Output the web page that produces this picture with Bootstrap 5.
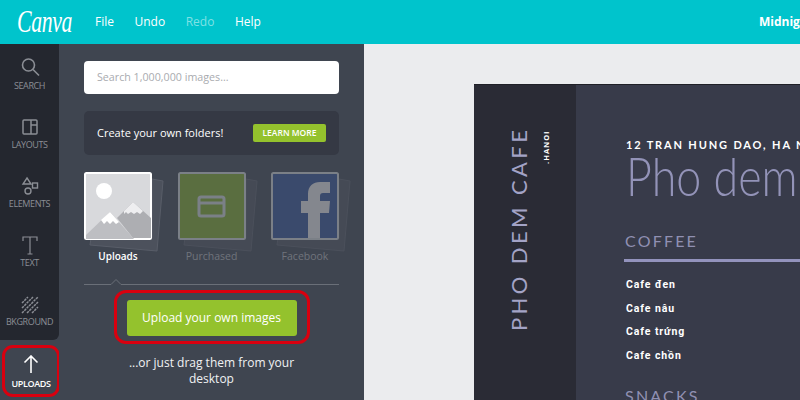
<!DOCTYPE html>
<html lang="en">
<head>
    <meta charset="UTF-8">
    <title>Canva</title>
    <link href="https://cdn.jsdelivr.net/npm/bootstrap@5.3.0/dist/css/bootstrap.min.css" rel="stylesheet">
    <style>
        html, body { height: 400px; overflow: hidden; }
        body { font-family: "Open Sans", sans-serif; background: #ebecee; }
        .topbar { height: 44px; background: #00c4cc; color: #fff; }
        .brand-box { width: 95px; flex: none; }
        .brand-word { font-family: "Liberation Serif", serif; font-style: italic; font-size: 32px; line-height: 42px; padding-left: 17px; letter-spacing: -.5px; white-space: nowrap; transform: scaleX(.68); transform-origin: 17px 50%; }
        .top-link { font-size: 12px; font-weight: 500; line-height: 44px; margin-right: 20.500px; }
        .top-link.faded { color: #7fe1e5; }
        .doc-title { font-size: 12px; font-weight: 700; line-height: 44px; margin-left: auto; width: 41px; white-space: nowrap; overflow: hidden; }
        .workspace { height: 356px; }
        .side-col { width: 59px; background: #3f4550; }
        .side-tabs { height: 296px; padding-top: 4px; background: #24272f; border-bottom-right-radius: 6px; }
        .side-tab { height: 59px; padding-top: 5px; color: #8b8e95; font-size: 9px; letter-spacing: -.4px; line-height: 12px; }
        .side-tab svg { display: block; height: 30px; margin-bottom: -3px; }
        .side-current { width: 58px; height: 52px; margin: 5px 0 0 2px; border: 3px solid #d9000f; border-radius: 11px; color: #fff; font-size: 9px; font-weight: 600; letter-spacing: -.4px; line-height: 12px; }
        .side-current svg { display: block; margin-bottom: 5px; }
        .panel { width: 305px; padding: 17px 25px 0; background: #3f4550; }
        .search-box { height: 33px; padding-left: 13px; background: #fff; border-radius: 4px; color: #a9abaf; font-size: 10.700px; line-height: 33px; }
        .promo { height: 44px; margin-top: 17px; padding: 0 13px; background: #353944; border-radius: 5px; color: #fff; font-size: 11px; }
        .promo-btn { width: 73px; height: 18px; background: #94c22d; border-radius: 2px; font-size: 8.500px; font-weight: 600; line-height: 18px; text-align: center; }
        .tiles { margin-top: 17px; }
        .tile { width: 68px; text-align: center; color: #70747c; font-size: 10.500px; }
        .tile svg { display: block; overflow: visible; margin-bottom: 8px; }
        .tile span { display: block; margin: 0 -10px; line-height: 16px; }
        .tile.active { color: #fff; font-weight: 600; font-size: 10px; }
        .rule-notch { height: 8px; margin-top: 14px; display: block; overflow: visible; }
        .ring { width: 196px; height: 54px; margin: 4px auto 0; padding: 7px 10px; border: 3px solid #d9000f; border-radius: 12px; }
        .upload-btn { height: 36px; background: #94c22d; border-radius: 3px; color: #fff; font-size: 12px; line-height: 36px; text-align: center; }
        .drag-note { margin-top: 11px; color: #f1f2f3; font-size: 12px; line-height: 16px; text-align: center; }
        .stage { padding: 40px 0 0 110px; overflow: hidden; }
        .sheet { width: 600px; height: 400px; background: #383b4a; border-top: 1px solid #1f2027; flex: none; }
        .sheet-strip { width: 102px; height: 100%; flex: none; padding: 45px 0 0 33px; background: #2a2b35; }
        .strip-title { writing-mode: vertical-rl; transform: rotate(180deg); color: #a3a3c6; font-family: "Lato", sans-serif; font-size: 22px; letter-spacing: 3.400px; line-height: 24px; height: 201px; text-align: right; white-space: nowrap; }
        .strip-sub { writing-mode: vertical-rl; transform: rotate(180deg); height: 34px; margin-left: 11px; color: #fff; font-size: 7.500px; font-weight: 700; letter-spacing: 1px; line-height: 9px; text-align: right; white-space: nowrap; }
        .sheet-body { padding: 53px 0 0 50px; }
        .sheet-address { color: #fff; font-family: "Lato", sans-serif; font-size: 11px; font-weight: 700; letter-spacing: 1.850px; line-height: 14px; white-space: nowrap; }
        .sheet-script { height: 52px; margin-top: 1px; color: #9393b8; font-family: "Lato", sans-serif; font-size: 54px; font-weight: 300; line-height: 46px; white-space: nowrap; transform: scaleX(.83); transform-origin: left; }
        .menu-head { margin-top: 26px; margin-left: -1px; color: #9090b2; font-family: "Lato", sans-serif; font-size: 16px; letter-spacing: 2.200px; line-height: 20px; }
        .menu-rule { width: 500px; height: 3px; margin: 8px 0 11px -2px; background: #9393bd; }
        .menu-item { color: #fff; font-family: "Roboto", sans-serif; font-size: 10.500px; font-weight: 700; letter-spacing: .9px; line-height: 23.600px; }
        .menu-head.next { margin-top: 19px; }
    </style>
</head>
<body>
    <header class="topbar d-flex">
        <div class="brand-box"><div class="brand-word">Canva</div></div>
        <span class="top-link">File</span>
        <span class="top-link">Undo</span>
        <span class="top-link faded">Redo</span>
        <span class="top-link">Help</span>
        <span class="doc-title">Midnight</span>
    </header>

    <div class="workspace d-flex">
        <!-- Left tabs -->
        <nav class="side-col flex-shrink-0">
            <div class="side-tabs">
                <div class="side-tab d-flex flex-column align-items-center">
                    <svg width="20" viewBox="0 0 20 30" fill="none" stroke="#8b8e95" stroke-width="1.600"><circle cx="8.500" cy="12" r="6"/><path d="M13 16.500l6 6"/></svg>
                    <span>SEARCH</span>
                </div>
                <div class="side-tab d-flex flex-column align-items-center">
                    <svg width="18" viewBox="0 0 18 30" fill="none" stroke="#8b8e95" stroke-width="1.500"><rect x="2" y="8" width="14" height="14" rx="1"/><path d="M10 8v14M10 13h6"/></svg>
                    <span>LAYOUTS</span>
                </div>
                <div class="side-tab d-flex flex-column align-items-center">
                    <svg width="20" viewBox="0 0 20 30" fill="none" stroke="#8b8e95" stroke-width="1.400"><path d="M7 7l4 6H3z"/><rect x="12.500" y="12" width="5" height="5"/><circle cx="8" cy="20" r="3"/></svg>
                    <span>ELEMENTS</span>
                </div>
                <div class="side-tab d-flex flex-column align-items-center">
                    <svg width="20" viewBox="0 0 20 30" fill="none" stroke="#8b8e95" stroke-width="1.200"><path d="M3 11V7h14v4M10 7v17M7.500 24h5"/></svg>
                    <span>TEXT</span>
                </div>
                <div class="side-tab d-flex flex-column align-items-center">
                    <svg width="18" viewBox="0 0 18 30" fill="none" stroke="#8b8e95" stroke-width="1.500" stroke-dasharray="2.500 .8"><path d="M1 14l6-6M1 19l11-11M1 24L17 8M6 24l11-11M11 24l6-6"/></svg>
                    <span>BKGROUND</span>
                </div>
            </div>
            <div class="side-current d-flex flex-column align-items-center justify-content-end pb-1">
                <svg width="16" height="18" viewBox="0 0 16 18" fill="none" stroke="#fff" stroke-width="1.600"><path d="M8 18V1M1.500 7.500L8 1l6.500 6.500"/></svg>
                <span>UPLOADS</span>
            </div>
        </nav>

        <!-- Uploads panel -->
        <aside class="panel flex-shrink-0">
            <div class="search-box">Search 1,000,000 images...</div>
            <div class="promo d-flex align-items-center justify-content-between">
                <span>Create your own folders!</span>
                <span class="promo-btn">LEARN MORE</span>
            </div>
            <div class="tiles d-flex justify-content-between">
                <div class="tile active">
                    <svg width="68" height="68" viewBox="0 0 68 68">
                        <path d="M68 7l11 2-6 70-67-6 1-7h61z" fill="#4c515c" stroke="#585d68"/>
                        <rect x="1" y="1" width="66" height="66" rx="1.500" fill="#d8d9dc" stroke="#fff" stroke-width="2"/>
                        <circle cx="20" cy="19" r="8" fill="#fff"/>
                        <path d="M33 46l16-16 18 16v20H49z" fill="#adaeb2"/>
                        <path d="M40 39l9-9 10 9-3 3-3-2-3 2-3-2-3 2-2-2-2 2z" fill="#eeeef0"/>
                        <path d="M2 63l24-23 24 27H2z" fill="#bdbec2"/>
                        <path d="M17 48l9-8 9 10-3 2-3-3-3 3-3-3-3 3z" fill="#fff"/>
                    </svg>
                    <span>Uploads</span>
                </div>
                <div class="tile">
                    <svg width="68" height="68" viewBox="0 0 68 68">
                        <path d="M68 7l11 2-6 70-67-6 1-7h61z" fill="#454a55" stroke="#4b505b"/>
                        <rect x="1" y="1" width="66" height="66" rx="1.500" fill="#5a6e40" stroke="#7b8087" stroke-width="2"/>
                        <rect x="21" y="25" width="25" height="19" rx="2" fill="none" stroke="#7b8087" stroke-width="3"/>
                        <path d="M21 31h25" stroke="#7b8087" stroke-width="3"/>
                    </svg>
                    <span>Purchased</span>
                </div>
                <div class="tile">
                    <svg width="68" height="68" viewBox="0 0 68 68">
                        <path d="M68 7l11 2-6 70-67-6 1-7h61z" fill="#454a55" stroke="#4b505b"/>
                        <rect x="1" y="1" width="66" height="66" rx="1.500" fill="#3a4a6c" stroke="#7b8087" stroke-width="2"/>
                        <path d="M37 66V41H30V29h7v-7c0-8 5-12 12-12h10v11h-7c-2 0-3 1-3 3v5h10l-1 12h-9v25z" fill="#84878e"/>
                    </svg>
                    <span>Facebook</span>
                </div>
            </div>
            <svg class="rule-notch" width="255" height="8" viewBox="0 0 255 8" fill="none" stroke="#6a6f78"><path d="M0 6.500h27l5-5 5 5h218"/></svg>
            <div class="ring"><div class="upload-btn">Upload your own images</div></div>
            <p class="drag-note mb-0">...or just drag them from your<br>desktop</p>
        </aside>

        <!-- Canvas -->
        <main class="stage flex-grow-1 d-flex">
            <div class="sheet d-flex">
                <div class="sheet-strip d-flex align-items-start">
                    <div class="strip-title">PHO DEM CAFE</div>
                    <div class="strip-sub">.HANOI</div>
                </div>
                <div class="sheet-body">
                    <div class="sheet-address">12 TRAN HUNG DAO, HA NOI</div>
                    <div class="sheet-script">Pho dem</div>
                    <div class="menu-head">COFFEE</div>
                    <div class="menu-rule"></div>
                    <div class="menu-item">Cafe đen</div>
                    <div class="menu-item">Cafe nâu</div>
                    <div class="menu-item">Cafe trứng</div>
                    <div class="menu-item">Cafe chồn</div>
                    <div class="menu-head next">SNACKS</div>
                </div>
            </div>
        </main>
    </div>

    <script src="https://cdn.jsdelivr.net/npm/bootstrap@5.3.0/dist/js/bootstrap.bundle.min.js"></script>
</body>
</html>
